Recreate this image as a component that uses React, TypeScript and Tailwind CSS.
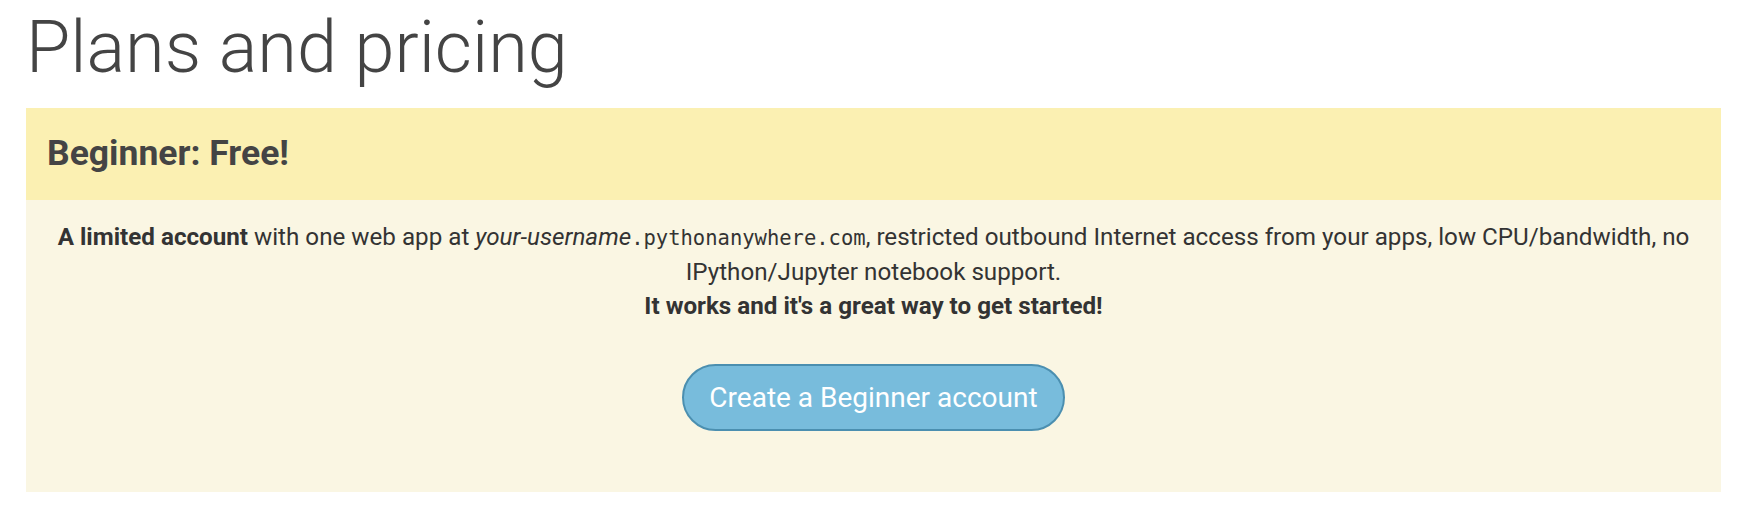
export default function App() {
  return (
    <div
      className="min-h-[530px] bg-white pl-[26px] pr-[29px] pt-[9px]"
      style={{ fontFamily: "Roboto, 'Liberation Sans', sans-serif" }}
    >
      <h1 className="text-[72px] leading-[77px] font-light text-[#444] mb-[22px]">
        Plans and pricing
      </h1>

      <div className="bg-[#faf6e3]">
        <div className="h-[92px] flex items-center px-[21px] bg-[#fbf0b2]">
          <h2 className="text-[35.5px] font-bold text-[#444]">Beginner: Free!</h2>
        </div>

        <div className="px-[30px] pt-[20px] pb-[61px] text-center text-[24.2px] leading-[34px] text-[#333]">
          <p>
            <strong className="font-bold">A limited account</strong> with one web app at{" "}
            <em>your-username</em>
            <code className="text-[20.5px] font-['DejaVu_Sans_Mono',monospace]">.pythonanywhere.com</code>,
            restricted outbound Internet access from your apps, low CPU/bandwidth, no IPython/Jupyter
            notebook support.
            <br />
            <strong className="font-bold">It works and it's a great way to get started!</strong>
          </p>

          <div className="mt-[41px] flex justify-center">
            <button className="h-[67px] px-[25px] rounded-full border-2 border-[#4b8fb0] bg-[#78bcdc] text-white text-[28px]">
              Create a Beginner account
            </button>
          </div>
        </div>
      </div>
    </div>
  );
}
